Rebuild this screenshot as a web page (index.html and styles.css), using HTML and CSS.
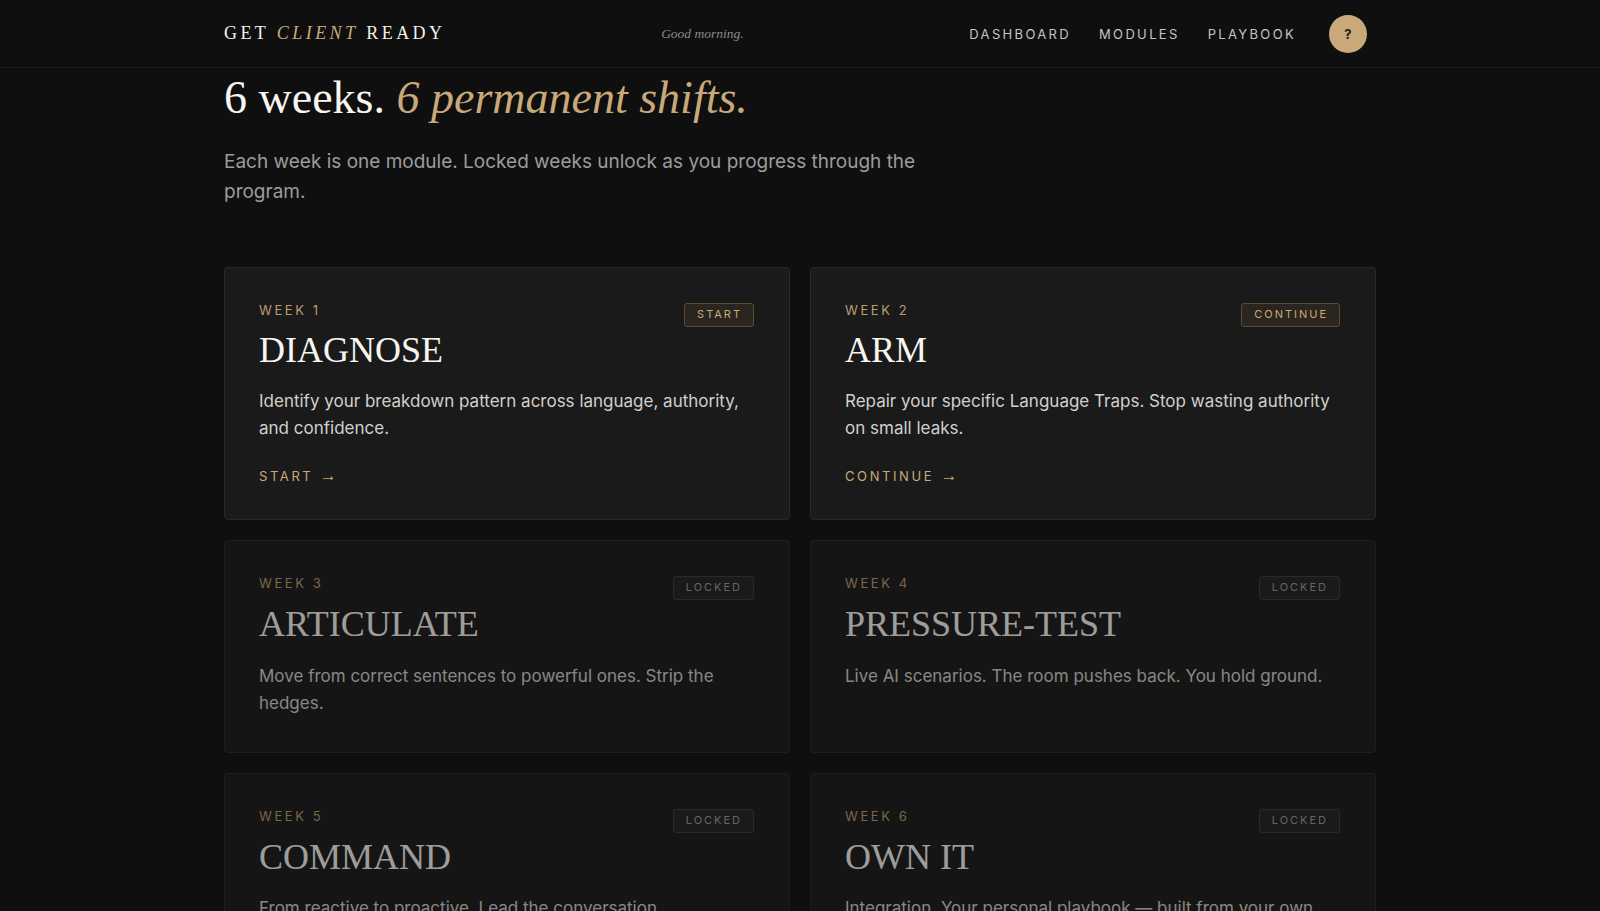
FILE: index.html
```html
<!DOCTYPE html>
<html>
<head>
  <title>Get Client Ready — Modules</title>
  <link rel="stylesheet" href="styles.css">
</head>
<body>
  <header class="topbar">
    <div class="topbar-inner">
      <div class="logo">GET <em>CLIENT</em> READY</div>
      <div class="greeting">Good morning.</div>
      <nav class="nav">
        <a href="#">Dashboard</a>
        <a href="#">Modules</a>
        <a href="#">Playbook</a>
        <button class="help">?</button>
      </nav>
    </div>
  </header>

  <main class="page">
    <h1 class="page-title">6 weeks. <em>6 permanent shifts.</em></h1>
    <p class="page-lead">Each week is one module. Locked weeks unlock as you progress through the program.</p>

    <div class="modules">
      <div class="module">
        <div class="module-top">
          <span class="week">Week 1</span>
          <span class="badge badge-active">Start</span>
        </div>
        <h3 class="module-name">DIAGNOSE</h3>
        <p class="module-desc">Identify your breakdown pattern across language, authority, and confidence.</p>
        <a class="module-link" href="#">Start <span class="arrow">&rarr;</span></a>
      </div>

      <div class="module">
        <div class="module-top">
          <span class="week">Week 2</span>
          <span class="badge badge-active">Continue</span>
        </div>
        <h3 class="module-name">ARM</h3>
        <p class="module-desc">Repair your specific Language Traps. Stop wasting authority on small leaks.</p>
        <a class="module-link" href="#">Continue <span class="arrow">&rarr;</span></a>
      </div>

      <div class="module locked">
        <div class="module-top">
          <span class="week">Week 3</span>
          <span class="badge">Locked</span>
        </div>
        <h3 class="module-name">ARTICULATE</h3>
        <p class="module-desc">Move from correct sentences to powerful ones. Strip the hedges.</p>
      </div>

      <div class="module locked">
        <div class="module-top">
          <span class="week">Week 4</span>
          <span class="badge">Locked</span>
        </div>
        <h3 class="module-name">PRESSURE-TEST</h3>
        <p class="module-desc">Live AI scenarios. The room pushes back. You hold ground.</p>
      </div>

      <div class="module locked">
        <div class="module-top">
          <span class="week">Week 5</span>
          <span class="badge">Locked</span>
        </div>
        <h3 class="module-name">COMMAND</h3>
        <p class="module-desc">From reactive to proactive. Lead the conversation.</p>
      </div>

      <div class="module locked">
        <div class="module-top">
          <span class="week">Week 6</span>
          <span class="badge">Locked</span>
        </div>
        <h3 class="module-name">OWN IT</h3>
        <p class="module-desc">Integration. Your personal playbook — built from your own sessions.</p>
      </div>
    </div>
  </main>
</body>
</html>
```

FILE: styles.css
```css
body {
  margin: 0;
  background-color: #0f0f0f;
  color: #f4f1ea;
  font-family: 'Inter', 'Liberation Sans', sans-serif;
  height: 911px;
  overflow: hidden;
}

/* Top bar */
.topbar {
  border-bottom: 1px solid #1e1e1e;
}

.topbar-inner {
  max-width: 1152px;
  height: 67px;
  margin: 0 auto;
  padding-right: 9px;
  box-sizing: border-box;
  display: flex;
  align-items: center;
  justify-content: space-between;
}

.logo {
  font-family: 'Liberation Serif', serif;
  font-size: 18px;
  letter-spacing: 0.19em;
  color: #f4f1ea;
}

.logo em {
  color: #c9a97a;
}

.greeting {
  font-family: 'Liberation Serif', serif;
  font-style: italic;
  font-size: 13.5px;
  color: #8c8a86;
  margin-right: 10px;
}

.nav {
  display: flex;
  align-items: center;
  gap: 28px;
}

.nav a {
  color: #c4c4c4;
  text-decoration: none;
  text-transform: uppercase;
  font-size: 13px;
  letter-spacing: 0.18em;
}

.help {
  width: 38px;
  height: 38px;
  margin-left: 5px;
  border: none;
  border-radius: 50%;
  background: #c9a97a;
  color: #1a1a1a;
  font-family: 'Inter', sans-serif;
  font-size: 13px;
  font-weight: 700;
  cursor: pointer;
}

/* Page */
.page {
  max-width: 1152px;
  margin: 0 auto;
}

.page-title {
  margin: 5px 0 0;
  font-family: 'Liberation Serif', serif;
  font-weight: 400;
  font-size: 46px;
  line-height: 1.1;
  color: #f7f5f0;
}

.page-title em {
  color: #c9a97a;
}

.page-lead {
  margin: 23px 0 0;
  max-width: 720px;
  font-size: 19px;
  line-height: 1.6;
  color: #9c9c9c;
}

/* Module cards */
.modules {
  display: grid;
  grid-template-columns: 1fr 1fr;
  gap: 20px;
  margin-top: 60px;
}

.module {
  background: #1a1a1a;
  border: 1px solid #292929;
  border-radius: 4px;
  padding: 33px 35px 33px 34px;
}

.module.locked {
  opacity: 0.62;
}

.module-top {
  display: flex;
  justify-content: space-between;
  align-items: flex-start;
  height: 20px;
}

.week {
  font-size: 13px;
  line-height: 19.5px;
  letter-spacing: 0.2em;
  text-transform: uppercase;
  color: #bb9d70;
}

.badge {
  margin-top: 2px;
  padding: 4px 11px 4px 12px;
  font-size: 11px;
  line-height: 13.5px;
  letter-spacing: 0.18em;
  text-transform: uppercase;
  border: 1px solid #3c3c3c;
  border-radius: 3px;
  background: #222;
  color: #9a9a9a;
}

.badge-active {
  background: #2a251e;
  border-color: #5a4b35;
  color: #c9a97a;
}

.module-name {
  margin: 8px 0 0;
  font-family: 'Liberation Serif', serif;
  font-weight: 400;
  font-size: 36px;
  line-height: 1.2;
  color: #f7f5f0;
}

.locked .module-name {
  margin-top: 9px;
}

.module-desc {
  margin: 15px 0 2px;
  font-size: 17px;
  line-height: 1.6;
  color: #d2d0cc;
}

.locked .module-desc {
  margin-top: 16px;
}

.module-link {
  display: inline-block;
  margin-top: 22px;
  font-size: 13px;
  line-height: 19.5px;
  letter-spacing: 0.2em;
  text-transform: uppercase;
  text-decoration: none;
  color: #c9a97a;
}

.arrow {
  font-family: 'Liberation Serif', serif;
  font-size: 17px;
  letter-spacing: 0;
}
```
